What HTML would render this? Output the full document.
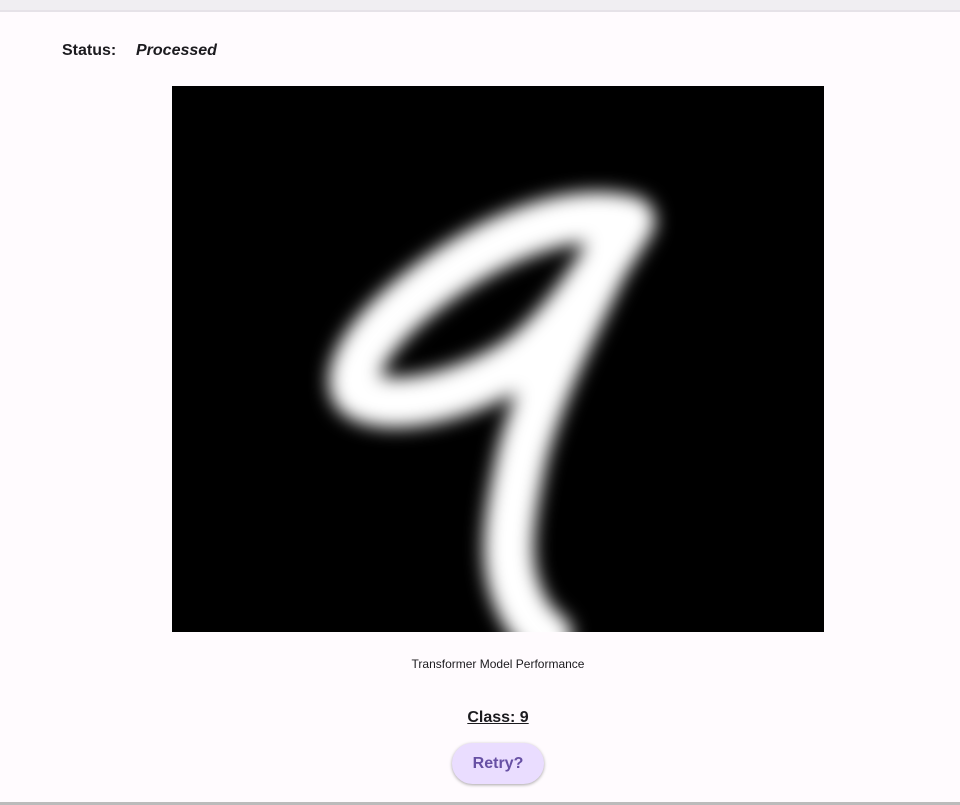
<!DOCTYPE html>
<html><head><style>
body{margin:0;width:960px;height:805px;background:#fffbfe;font-family:"Liberation Sans",Roboto,sans-serif;position:relative;overflow:hidden}
.top{position:absolute;top:0;left:0;width:960px;height:10px;background:#f0eef2;border-bottom:2px solid #e6e2e8}
.st{position:absolute;top:42px;left:62px;font-size:16px;font-weight:bold;color:#1c1b1f}
.pr{position:absolute;top:42px;left:136px;font-size:16px;font-weight:bold;font-style:italic;color:#1c1b1f}
.img{position:absolute;left:172px;top:86px;width:652px;height:546px;background:#000;overflow:hidden}
.cap{position:absolute;top:657px;left:0;width:996px;text-align:center;font-size:12px;color:#1c1b1f}
.cls{position:absolute;top:709px;left:0;width:996px;text-align:center;font-size:16px;font-weight:bold;text-decoration:underline;color:#1c1b1f}
.btn{position:absolute;left:452px;top:743px;width:92px;height:41px;border-radius:21px;background:#eaddff;box-shadow:0 1px 3px rgba(0,0,0,.35);color:#6750a4;font-weight:bold;font-size:16px;text-align:center;line-height:41px}
.bot{position:absolute;left:0;top:802px;width:960px;height:3px;background:#bbb}
</style></head><body>
<div class="top"></div>
<div class="st">Status:</div><div class="pr">Processed</div>
<div class="img"><svg width="652" height="546" viewBox="0 0 652 546">
<defs><filter id="b" x="-20%" y="-20%" width="140%" height="140%"><feGaussianBlur stdDeviation="9"/></filter></defs>
<g filter="url(#b)" fill="none" stroke="#fff" stroke-linecap="round" stroke-width="50">
<path d="M458 135 C400 120,320 150,250 205 C185 255,170 300,190 310 C230 330,320 300,360 265 C400 230,430 180,458 135"/>
<path d="M440 160 C400 240,365 310,350 370 C335 440,330 480,350 520 C360 540,370 546,375 550"/>
</g></svg></div>
<div class="cap">Transformer Model Performance</div>
<div class="cls">Class: 9</div>
<div class="btn">Retry?</div>
<div class="bot"></div>
</body></html>
